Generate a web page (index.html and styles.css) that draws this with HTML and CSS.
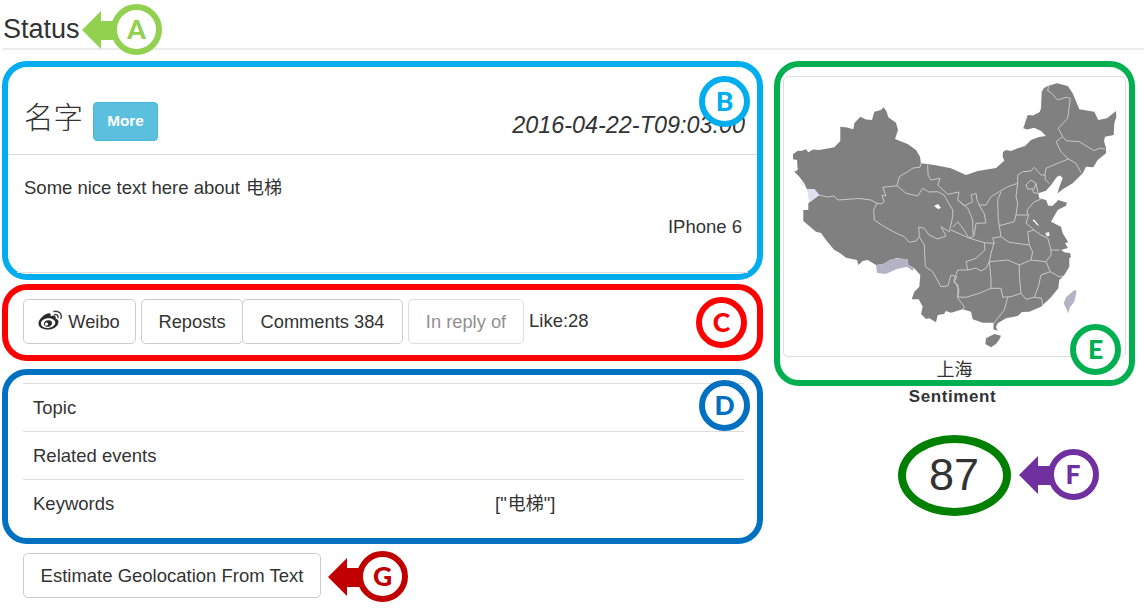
FILE: index.html
```html
<!DOCTYPE html>
<html lang="en">
<head>
<meta charset="utf-8">
<title>Status</title>
<link rel="stylesheet" href="styles.css">
</head>
<body>
<div class="page">
  <header class="page-header">
    <h1 class="page-title">Status</h1>
    <div class="pointer pointer-a">
      <svg class="arrow" viewBox="0 0 36 40"><path d="M0 20 19 1V11H36V30H19V39Z"/></svg>
      <span class="ring">A</span>
    </div>
  </header>
  <main class="columns">
    <div class="left">
      <section class="frame frame-b">
        <div class="post-head">
          <h2 class="name">名字</h2>
          <button class="more">More</button>
          <em class="date">2016-04-22-T09:03:00</em>
        </div>
        <div class="post-body">
          <p class="post-text">Some nice text here about <span class="zh">电梯</span></p>
          <p class="device">IPhone 6</p>
        </div>
        <span class="ring badge-b">B</span>
      </section>
      <section class="frame frame-c">
        <button class="btn weibo">
          <svg class="weibo-icon" viewBox="0 0 25 21">
            <path fill="#2b2b2b" fill-rule="evenodd" d="M9.500 3.600C12 2.600 13.300 4 12.600 6.200 15.800 5 18.500 5.600 17.600 8.600 20 9.400 21 11 20.200 13.500 18.800 17.500 14 19.700 9.500 19.600 4.500 19.500.5 17.200.5 13.500.5 9.500 5.500 5 9.500 3.600ZM9.500 8.200C5.400 8.700 2.800 11 3 13.800 3.200 16.700 6.600 18.300 10.600 17.900 14.700 17.500 17.600 15 17.300 12.300 17 9.500 13.500 7.800 9.500 8.200Z"/>
            <path fill="#2b2b2b" fill-rule="evenodd" d="M9.800 10.300C12.600 9.800 14.600 11.500 14 13.700 13.400 16.100 10.500 17.500 8.100 16.600 5.900 15.800 5.300 13.700 6.600 12 7.400 11 8.500 10.500 9.800 10.300ZM8.800 12.600A1.600 1.500 0 1 0 9 15.500 1.600 1.500 0 0 0 8.800 12.600Z"/>
            <path fill="none" stroke="#444" stroke-width="1.400" stroke-linecap="round" d="M16 1.500C21 .4 24.500 4.400 22.900 8.500M16.500 4.600C18.900 4 20.500 5.600 19.900 7.600"/>
          </svg>Weibo</button>
        <div class="group"><button class="btn reposts">Reposts</button><button class="btn comments">Comments 384</button></div>
        <button class="btn reply" disabled>In reply of</button>
        <span class="like">Like:28</span>
        <span class="ring badge-c">C</span>
      </section>
      <section class="frame frame-d">
        <dl class="details">
          <div class="row"><dt>Topic</dt><dd></dd></div>
          <div class="row"><dt>Related events</dt><dd></dd></div>
          <div class="row"><dt>Keywords</dt><dd>["<span class="zh">电梯</span>"]</dd></div>
        </dl>
        <span class="ring badge-d">D</span>
      </section>
      <div class="estimate">
        <button class="btn geo">Estimate Geolocation From Text</button>
        <div class="pointer pointer-g">
          <svg class="arrow" viewBox="0 0 36 40"><path d="M0 20 19 1V11H36V30H19V39Z"/></svg>
          <span class="ring">G</span>
        </div>
      </div>
    </div>
    <aside class="right">
      <section class="frame frame-e">
        <div class="map-box">
          <svg class="map" viewBox="784 77 340 278">
            <path class="land" d="M792 154.300 796.700 150.700 800 151 805 149.300 807.300 152.300 812 149.500 818.300 150 833.300 147.300 839.300 141 839.300 126.700 846 127.500 852.300 129.300 853.300 123.300 859.300 116.700 865 119.500 871 120 873.300 111.700 880 110 882.700 107.300 885.700 111.700 887.300 117.300 895 122.700 897 130 894 139 906.700 144 915 150 919 156.700 920 163.300 933.300 165 950 168.300 965 175 976.700 171 995 168 1003.300 160.700 1001.700 156.700 1002 152 1005 150 1010 151 1016.700 148.300 1024 146 1030 140 1038 137 1045 136 1040 131 1033.300 127.700 1026 129.500 1022.300 128.300 1026.700 115 1032 115.500 1038.700 112 1040 108.300 1040.700 91.700 1043 88 1046.700 86 1056 83.300 1066.700 86 1071.700 93.300 1078.300 109.300 1093.300 111.700 1097.300 120 1106 118.300 1115 111 1115.300 116.700 1113.300 123.300 1112.700 135 1104 136.700 1103 141 1105 148 1105 153.300 1096.700 160 1092.300 167.300 1085 166.700 1081.700 173.300 1071.700 183.300 1061.700 189.300 1056.500 193.500 1058 188 1061.700 178 1059 175.500 1056 176.700 1050 185 1045 190.700 1037.300 193.300 1038.300 198.300 1045 200 1047.300 205.700 1051.700 205.700 1057.300 200 1066 202.700 1065 205.700 1056.700 210 1050 221.700 1060 226.700 1061.700 233.300 1067.300 242.300 1064 243 1067 248 1060 250 1064 252.500 1069 253 1070 257 1068.300 258.300 1068.300 266.700 1063.300 275 1058.300 280 1057.300 288.300 1050 297.300 1040 306.700 1028.300 311.700 1021 312 1016.700 316 1005 318.300 996.700 323.300 995 327 996.700 330.700 992.300 329.300 992.700 322.700 981.700 322.700 971.700 319.300 970 311.700 961.700 309.300 950 312.700 945 311 943 314 936.700 315 935 322.300 928.300 318.300 925 319 920 314 921.700 306.700 917.700 299.300 910.700 299.300 913.300 291.700 918.300 286.700 919.300 275 913.300 268.300 907.300 265 906.700 259.300 895 258.300 882 264 875 265 866.700 260 861.700 261 857.300 265 856 260 845 257.700 839 253 833.300 250 825 240 820 233 815 231.700 802.300 221 802.300 210 807.300 210 807.300 203.300 818.300 195 813.300 189.300 806 189.300 803 183 798.300 176.700 793.300 171.700 796.700 170 796 160 792 159.300Z"/>
            <path class="land" d="M985 338.300 993.300 334 1000 335.700 998 340 995 344 990 347.300 984.300 344Z"/>
            <path class="pale" d="M806 189.300 813.300 189 818.300 195 808.300 202.300Z M798 180 802 184 802 187Z"/>
            <path class="lilac" d="M875 265 882 264 890 259 906.700 259 907 265 913 268 911.700 271 906 266.700 895 269.300 885 274 876 273Z M1073.300 290 1075.700 291 1073.300 301.700 1069 307 1067.300 313.300 1062.700 303.300 1065 297.300Z"/>
            <g class="borders">
              <path d="M818 195 826 197 833 196 837 200 858 198.500 870 200 876 203.300 880 204 883 201.700 881 195 885 196 881.700 187.300 896 185.700 898.300 176.700 906.700 171.700 912 168 919 167.300 920 163"/>
              <path d="M926.700 165 927 175 930 180 939 178.300 936.700 185 946.700 194.300 958 192 956.700 200 963.300 205.700 971.700 201.700 970 195 975 193.300 976 200 978.300 205 985 205 990 196.700 998.300 191.700 1006.700 186.700 1016.700 183.300 1016.700 175 1021.700 171.700 1030 171 1033.300 167.300 1040 175 1044 175 1045 168.300 1056.700 163.300 1067.300 159 1060 151.700 1055 141.700 1061.700 136.700 1057.300 128.300 1066.700 118.300 1069.300 98.300 1065 97.300 1056.700 100 1050 92.700 1046.700 91 1047.500 86"/>
              <path d="M1061.700 136.700 1065 140.700 1078.300 141.700 1087 147 1093.300 150.700 1099 148 1104 149.300M1067.300 159 1075 163.300 1080 172.700M1044 175 1044.300 180 1048.300 183.300"/>
              <path d="M1025 185 1030 180 1035 183.300 1033 189 1026.700 189ZM1035 183.300 1036 188 1037 193 1033 193 1031 189M1016.700 183.300 1015 196.700 1016.700 203 1015 215 1026.700 215 1026 210 1033 202 1040 199M1000 191.700 996.700 200 997.300 220 998.300 225.700 1000 236.700"/>
              <path d="M896 185.700 905 193.300 916.700 196 921.700 188.300 928 192 936.700 191.700 943 195 951.700 210 951.700 216.700 948.300 231.700 940 226.700 945 236 936.700 239 928 235 923.300 228.300 917.700 227 918.300 236.700 915 241 908.300 242.300 903.300 236.700 895 233 883.300 226.700 873.300 220 872.700 210 876 203"/>
              <path d="M918.300 236.700 923.300 245 924.300 266.700 931.700 271.700 940 286.700 946.700 286 950 275 956 277 952.700 282 957 285 956.700 298 963.300 306.700 962 309"/>
              <path d="M956.700 200 966.700 208 971.700 220 972 235M952 227 956.700 221.700 961.700 228 968 238 973 236 975 223.300 985 223 983 213 978 205"/>
              <path d="M950 230 968 238 983.300 242.700 993.300 243.300 991.700 238 1000 236.700 1008 242.300 1028.300 245 1026.700 231.700 1033 230 1025 223 1028 214M998.300 225.700 1013.300 221.700 1015 215M1033 230 1040 235 1046.700 238 1050 250 1058.300 250"/>
              <path d="M993 243 990 253.300 988.300 261.700 1006.700 260 1018.300 265 1030 260 1031.700 251.700 1028.300 245M1030 260 1045 261.700 1050 255 1050 250M1045 261.700 1049.300 271.700 1058 276.700 1062 276M1049.300 271.700 1040 275 1037.300 286.700 1033.300 297.300 1040.700 298.300 1041.700 305"/>
              <path d="M1018.300 265 1018.300 275 1020 293.300 1025 299.300 1033.300 297.300M1020 293.300 1010 296.700 1001.700 297.300 1000 288.300 990 288.300 990 278.300 988.300 261.700M983.300 242.700 984 250 975 258.300 965 261.700 966.700 270 975 268 980 271 985 268.300 988.300 261.700"/>
              <path d="M966.700 270 956.700 270 953 280 958 290 957 297 965 297.300 978.300 293.300 990 288.300M1006.700 297.300 1003.300 310 996.700 318.300 993 323"/>
            </g>
            <path class="water" d="M933 206 937 204 940 208 937 209ZM1031.500 220 1033 219.500 1038.500 226 1036 225ZM1044.500 233 1048 232 1048.500 236 1045.500 236Z"/>
          </svg>
        </div>
        <p class="city">上海</p>
        <span class="ring badge-e">E</span>
      </section>
      <h3 class="sentiment">Sentiment</h3>
      <div class="score">87
        <div class="pointer pointer-f">
          <svg class="arrow" viewBox="0 0 36 40"><path d="M0 20 19 1V11H36V30H19V39Z"/></svg>
          <span class="ring">F</span>
        </div>
      </div>
    </aside>
  </main>
</div>
</body>
</html>
```
FILE: styles.css
```css
* { box-sizing: border-box; }
body {
  margin: 0;
  background: #fff;
  color: #333;
  font: 18.5px/26px "Liberation Sans", "Noto Sans CJK SC", sans-serif;
}
h1, h2, h3, p, dl, dd { margin: 0; }
.page { width: 1144px; height: 608px; overflow: hidden; }
.zh { font-size: 18px; font-family: "Noto Sans CJK SC", sans-serif; line-height: 1; margin-left: 1px; }

.page-header {
  position: relative;
  height: 50px;
  margin-left: 3px;
  padding-top: 13px;
  border-bottom: 2px solid #ebebeb;
}
.page-title { font-size: 27px; line-height: 32px; font-weight: 400; }

.columns {
  display: grid;
  grid-template-columns: 761px 361px;
  gap: 11px;
  padding: 11px 0 0 2px;
}
.left { display: flex; flex-direction: column; }
.frame { position: relative; border: 6px solid; border-radius: 25px; }

/* lettered markers */
.ring {
  display: flex;
  align-items: center;
  justify-content: center;
  width: 51px;
  height: 51px;
  padding-bottom: 2px;
  border: 6px solid currentColor;
  border-radius: 50%;
  background: #fff;
  font: 900 26.5px/30px Lato, sans-serif;
}
.badge-b, .badge-c, .badge-d, .badge-e { position: absolute; }
.badge-b { right: 7px; top: 9px; color: #00aeef; }
.badge-c { right: 10px; top: 7px; color: #f00; }
.badge-d { right: 7px; top: 5px; color: #0070c0; }
.badge-e { right: 8px; bottom: 5px; color: #00b050; }
.pointer { position: absolute; display: flex; align-items: center; }
.arrow { width: 36px; height: 40px; margin-right: -7px; fill: currentColor; }
.pointer .ring { position: relative; }
.pointer-a { left: 79px; top: 4px; color: #92d050; }
.pointer-g { left: 305px; top: -2px; color: #c00000; }
.pointer-f { left: 113px; top: 6px; color: #7030a0; }

.frame-b { height: 219px; border-color: #00aeef; }
.post-head {
  display: flex;
  height: 88px;
  padding: 0 12px 0 16px;
  border-bottom: 1px solid #ddd;
}
.name {
  width: 69px;
  padding-top: 30px;
  font: 300 29.5px/36px "Noto Sans CJK SC", sans-serif;
}
.more {
  width: 65px;
  height: 39px;
  margin-top: 35px;
  padding: 0 0 2px;
  border: 1px solid #46b8da;
  border-radius: 4px;
  background: #5bc0de;
  color: #fff;
  font: 700 15.3px/20px "Liberation Sans", sans-serif;
}
.date { margin: 44px 0 0 auto; font-size: 23.4px; line-height: 28px; }
.post-body { height: 118px; margin: 0 9px; border-bottom: 1px solid #ddd; padding: 20px 6px 0 7px; }
.device { margin-top: 13px; text-align: right; }

.frame-c {
  display: flex;
  align-items: flex-start;
  height: 77px;
  margin-top: 4px;
  padding: 9px 0 0 15px;
  border-color: #f00;
}
.btn {
  height: 45px;
  padding: 0;
  border: 1.500px solid #ccc;
  border-radius: 5px;
  background: #fff;
  color: #333;
  font: 18.3px/26px "Liberation Sans", sans-serif;
}
.weibo { width: 113px; display: flex; align-items: center; justify-content: center; gap: 5px; padding-right: 1px; }
.weibo-icon { width: 25px; height: 21px; margin-top: -3px; }
.group { display: flex; margin: 0 5px; }
.reposts { width: 102px; }
.comments { width: 161px; margin-left: -1px; }
.reply { width: 116px; opacity: .65; color: #555; }
.like { margin: 9px 0 0 5px; line-height: 26px; }

.frame-d { height: 175px; margin-top: 8px; padding: 8px 13px 0 15px; border-color: #0070c0; }
.row {
  display: grid;
  grid-template-columns: 462px 1fr;
  align-items: center;
  height: 48.200px;
  padding-left: 10px;
  border-top: 1px solid #ddd;
}
.estimate { position: relative; margin: 9px 0 0 21px; height: 45px; display: flex; }
.geo { width: 298px; font-size: 18.5px; }

.frame-e { height: 325px; padding: 9px 3px 0; border-color: #00b050; }
.map-box { height: 281px; border: 1px solid #ddd; border-radius: 5px; }
.map { display: block; width: 340px; height: 278px; margin: 0 auto; }
.land { fill: #808080; }
.pale { fill: #dfdff2; }
.lilac { fill: #b3b3c6; }
.water { fill: #fff; }
.borders { fill: none; stroke: #c8c8c8; stroke-width: 1; stroke-linejoin: round; }
.city { margin-top: -2px; text-align: center; font: 400 18px/26px "Noto Sans CJK SC", sans-serif; }
.sentiment { text-align: center; margin-right: 4px; font-size: 17px; line-height: 22px; letter-spacing: .6px; }
.score {
  position: relative;
  width: 113px;
  height: 81px;
  margin: 27px 0 0 123.500px;
  border: 8px solid #008000;
  border-radius: 50%;
  text-align: center;
  font-size: 45px;
  line-height: 64px;
}
```
